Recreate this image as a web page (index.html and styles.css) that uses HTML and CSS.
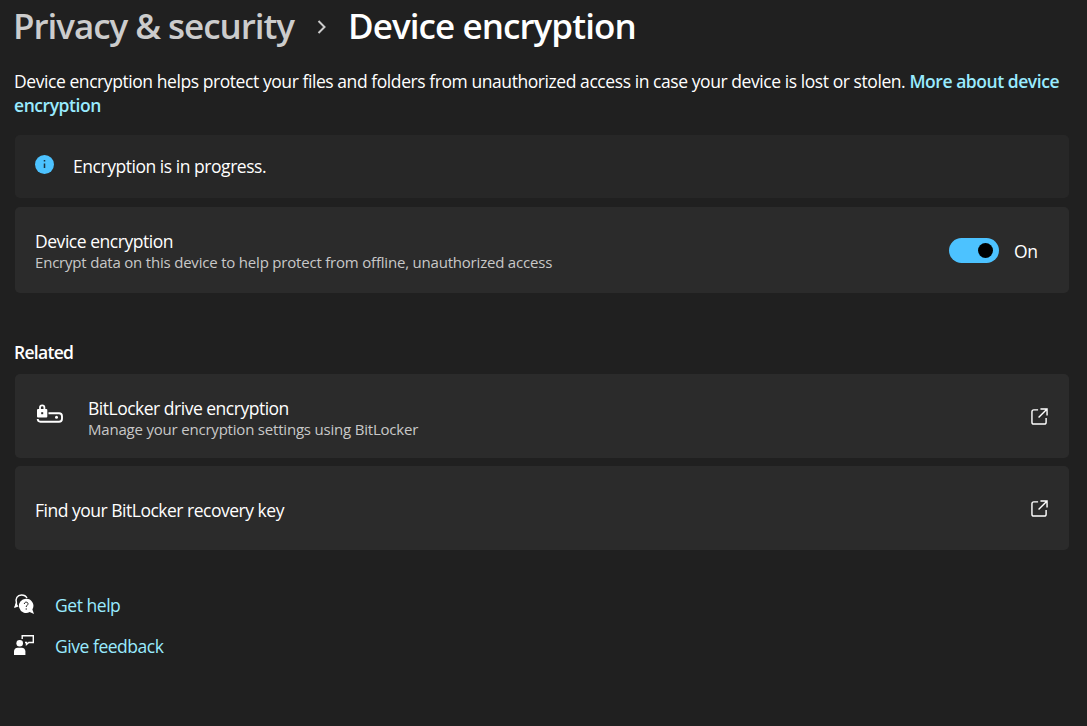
FILE: index.html
```html
<!DOCTYPE html>
<html lang="en">
<head>
    <meta charset="UTF-8">
    <meta name="viewport" content="width=device-width, initial-scale=1.0">
    <title>Device encryption</title>
    <link rel="stylesheet" href="styles.css">
</head>

<body>
    <main class="page">
        <h1 class="breadcrumb">
            <span class="parent">Privacy &amp; security</span>
            <svg class="chevron" viewBox="0 0 10 16"><path d="M1.5 2 L7.5 8 L1.5 14"/></svg>
            <span class="current">Device encryption</span>
        </h1>

        <p class="intro">Device encryption helps protect your files and folders from unauthorized access in case your device is lost or stolen. <a href="#">More about device<br>encryption</a></p>

        <section class="card notice">
            <svg class="info-icon" viewBox="0 0 20 20">
                <circle cx="10" cy="10" r="10" fill="#4cc2ff"/>
                <path d="M9.2 5.2h1.6v1.6H9.2zM9.2 9h1.6v4.600H9.2z" fill="#1c3340"/>
            </svg>
            <span class="title">Encryption is in progress.</span>
        </section>

        <section class="card encryption">
            <div class="text">
                <div class="title">Device encryption</div>
                <div class="description">Encrypt data on this device to help protect from offline, unauthorized access</div>
            </div>
            <div class="toggle"><div class="knob"></div></div>
            <span class="toggle-label">On</span>
        </section>

        <h2 class="related">Related</h2>

        <section class="card link-card">
            <svg class="drive-icon" viewBox="0 0 28 20">
                <path d="M12.5 9.3H23a3 3 0 0 1 3 3v2.5a3 3 0 0 1-3 3H4.5a3 3 0 0 1-2.8-2.8" fill="none" stroke="#fff" stroke-width="1.9"/>
                <path d="M4 6V3.500a2.200 2.200 0 0 1 4.400 0V6" fill="none" stroke="#fff" stroke-width="1.8"/>
                <rect x="1" y="5" width="10.3" height="8.4" rx="1" fill="#fff"/>
                <rect x="5.2" y="8.2" width="2" height="2" fill="#2b2b2b"/>
                <circle cx="20.5" cy="13.300" r="1.5" fill="#fff"/>
            </svg>
            <div class="text">
                <div class="title">BitLocker drive encryption</div>
                <div class="description">Manage your encryption settings using BitLocker</div>
            </div>
            <svg class="open-icon" viewBox="0 0 18 18">
                <path d="M7.5 2H3a2 2 0 0 0-2 2v11a2 2 0 0 0 2 2h11a2 2 0 0 0 2-2v-4.5M10 1h7v7M16.500 1.500 8 10"/>
            </svg>
        </section>

        <section class="card link-card">
            <div class="text recovery">
                <div class="title">Find your BitLocker recovery key</div>
            </div>
            <svg class="open-icon" viewBox="0 0 18 18">
                <path d="M7.5 2H3a2 2 0 0 0-2 2v11a2 2 0 0 0 2 2h11a2 2 0 0 0 2-2v-4.5M10 1h7v7M16.500 1.500 8 10"/>
            </svg>
        </section>

        <footer class="help">
            <a href="#">
                <svg viewBox="0 0 20 20">
                    <path d="M1.200 13 2.500 9.300C1 4.300 3.300 1 7.500 1c2.700 0 4.500 1 5.500 3" fill="none" stroke="#fff" stroke-width="1.4"/>
                    <path d="M0 14 2 8.500 4.500 12.500z" fill="#fff"/>
                    <path d="M12 4.700a7.100 7.100 0 1 0 3.700 13.200l4.300 2.100-1.600-4.600A7.100 7.100 0 0 0 12 4.700z" fill="#fff"/>
                    <path d="M10.300 10c0-2.500 3.700-2.400 3.700-.2 0 1.500-1.800 1.500-1.800 3.200M12.200 14.300v1.400" fill="none" stroke="#202020" stroke-width="1"/>
                </svg>
                <span>Get help</span>
            </a>
            <a href="#">
                <svg viewBox="0 0 20 20">
                    <circle cx="5.700" cy="8.200" r="3.300" fill="#fff"/>
                    <path d="M0 20v-3.500c0-2.200 1.500-3.700 3.700-3.700h4c2.200 0 3.700 1.500 3.700 3.700V20z" fill="#fff"/>
                    <path d="M8.200 4V.8h11.100v6.700h-4.500L12.500 9.500v-2H11" fill="none" stroke="#fff" stroke-width="1.4"/>
                </svg>
                <span>Give feedback</span>
            </a>
        </footer>
    </main>
</body>
</html>
```
FILE: styles.css
```css
* {
    margin: 0;
    padding: 0;
    box-sizing: border-box;
}

body {
    font-family: "Segoe UI", "Open Sans", "Noto Sans", sans-serif;
    font-size: 17.5px;
    letter-spacing: -0.46px;
    background-color: #202020;
    color: #fff;
    height: 100vh;
    overflow: hidden;
}

a {
    color: #99ebff;
    text-decoration: none;
}

.page {
    padding: 0 18px 0 14px;
}

.breadcrumb {
    display: flex;
    align-items: center;
    height: 52px;
    margin-left: -1px;
    font-size: 35px;
    font-weight: 600;
    line-height: 50px;
    padding-bottom: 1px;
    white-space: nowrap;
}

.parent {
    width: 281px;
    color: #cccccc;
    letter-spacing: -1.05px;
}

.current {
    letter-spacing: -0.93px;
}

.chevron {
    width: 10px;
    height: 16px;
    margin: 2px 21px 0 23px;
    fill: none;
    stroke: #cccccc;
    stroke-width: 2;
}

.intro {
    margin-top: 17px;
    line-height: 24px;
    letter-spacing: -0.43px;
    white-space: nowrap;
}

.intro a {
    font-weight: 600;
    letter-spacing: -0.45px;
}

.card {
    display: flex;
    align-items: center;
    margin-left: 1px;
    padding: 0 20px;
    background-color: #2b2b2b;
    border-radius: 5px;
    white-space: nowrap;
}

.notice {
    height: 63px;
    margin-top: 18px;
    background-color: #272727;
}

.notice .title {
    padding-bottom: 1px;
}

.info-icon {
    width: 19px;
    height: 19px;
    margin: 0 19px 4px 0;
}

.text {
    flex: 1;
}

.title {
    line-height: 23px;
}

.description {
    font-size: 15px;
    line-height: 19px;
    color: #c8c8c8;
    letter-spacing: -0.2px;
}

.encryption {
    height: 86px;
    margin-top: 9px;
    padding-right: 31px;
}

.encryption .text {
    padding-top: 1px;
}

.toggle {
    display: flex;
    align-items: center;
    justify-content: flex-end;
    width: 50px;
    height: 25px;
    margin-right: 15px;
    padding-right: 6px;
    border-radius: 13px;
    background-color: #4cc2ff;
}

.knob {
    width: 15px;
    height: 15px;
    border-radius: 50%;
    background-color: #000;
}

.toggle-label {
    width: 24px;
    padding-top: 2px;
}

.related {
    margin: 48px 0 10px;
    font-size: 17.5px;
    font-weight: 600;
    line-height: 23px;
    letter-spacing: -0.7px;
}

.link-card {
    height: 84px;
    margin-bottom: 8px;
}

.link-card .text {
    padding-top: 3px;
}

.link-card .title {
    letter-spacing: -0.49px;
}

.link-card .recovery {
    padding-top: 5px;
}

.drive-icon {
    width: 28px;
    height: 20px;
    margin: 0 24px 4px 1px;
}

.open-icon {
    width: 17px;
    height: 17px;
    margin: 1px 1px 0 0;
    fill: none;
    stroke: #fff;
    stroke-width: 1.5;
}

.help {
    margin-top: 44px;
}

.help a {
    display: flex;
    align-items: center;
    height: 23px;
    margin-bottom: 18px;
}

.help span {
    padding-bottom: 2px;
}

.help svg {
    width: 20px;
    height: 20px;
    margin: 0 21px 3px 0;
}
```
